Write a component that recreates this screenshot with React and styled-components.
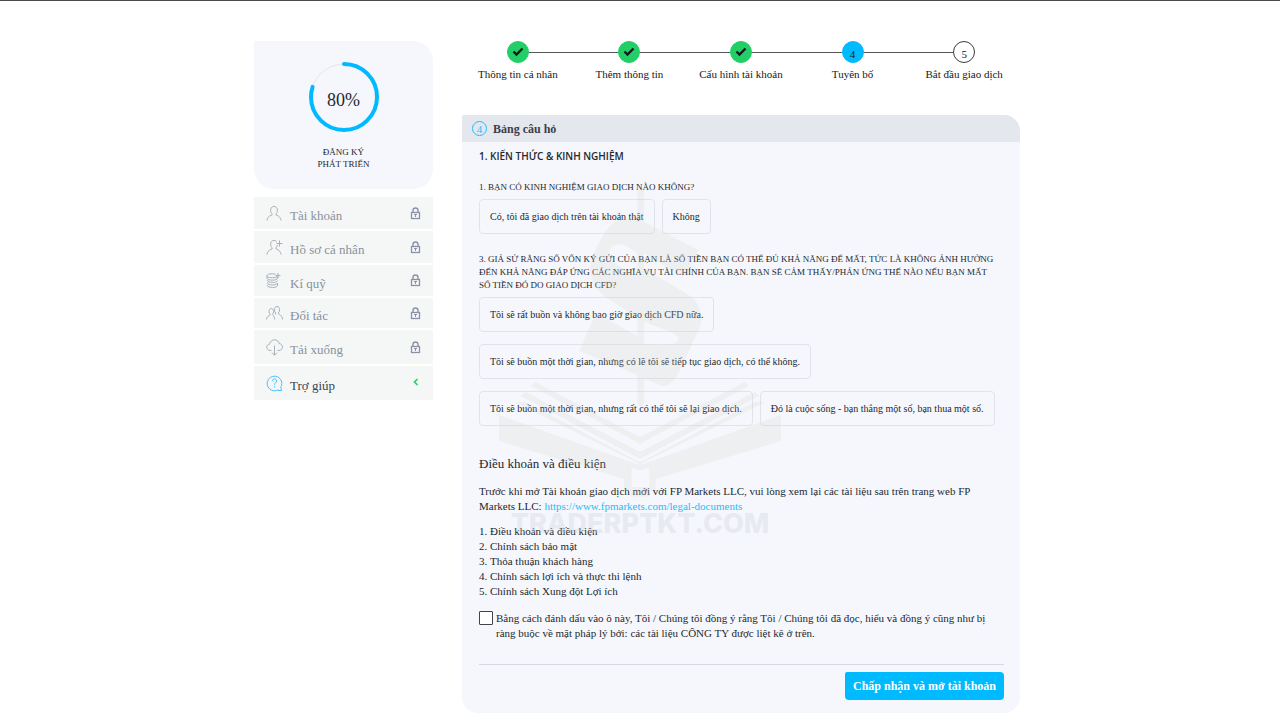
import React from 'react';
import styled, { createGlobalStyle } from 'styled-components';

const GlobalStyle = createGlobalStyle`
  * {
    box-sizing: border-box;
  }

  body {
    margin: 0;
    background: #fff;
    color: #24282f;
    font-family: 'Liberation Serif', 'Times New Roman', serif;
  }
`;

const Page = styled.div`
  position: relative;
  border-top: 1px solid #4a4a4a;
  overflow: hidden;
`;

const Container = styled.div`
  display: grid;
  grid-template-columns: 179px minmax(0, 1fr);
  column-gap: 29px;
  align-items: start;
  max-width: 772px;
  margin: 0 auto;
  padding: 40px 6px 7px 0;
`;

const Sidebar = styled.aside`
  display: flex;
  flex-direction: column;
  gap: 8px;
`;

const ProgressCard = styled.section`
  display: flex;
  flex-direction: column;
  align-items: center;
  height: 148px;
  padding-top: 20px;
  border-radius: 0 20px 20px 20px;
  background: #f5f7fc;
`;

const Ring = styled.div`
  display: grid;
  place-items: center;
  width: 72px;
  height: 72px;

  > * {
    grid-area: 1 / 1;
  }
`;

const Percent = styled.span`
  padding-top: 6px;
  font-size: 18px;
  line-height: 20px;
`;

const ProgressLabel = styled.p`
  margin: 13px 0 0;
  font-size: 9px;
  line-height: 12px;
  text-align: center;
`;

const Menu = styled.nav`
  display: flex;
  flex-direction: column;
  gap: 2px;
`;

const MenuLink = styled.a`
  display: flex;
  align-items: center;
  height: ${({ $height }) => $height}px;
  padding: 0 12px;
  background: #f5f7f7;
  color: ${({ $active }) => ($active ? '#3d434c' : '#89909c')};
  font-size: 13px;
  line-height: 16px;
  text-decoration: none;

  > svg:first-child {
    flex: none;
    margin-right: 7px;
    color: ${({ $active }) => ($active ? '#45c4fa' : '#a9aeb9')};
  }
`;

const MenuText = styled.span`
  flex: 1;
  padding-top: 6px;
`;

const Main = styled.main`
  min-width: 0;
`;

const Steps = styled.ol`
  display: grid;
  grid-template-columns: repeat(5, 1fr);
  margin: 0;
  padding: 0;
  list-style: none;
`;

const Step = styled.li`
  display: flex;
  flex-direction: column;
  align-items: center;
  color: #16181c;
  font-size: 11px;
  line-height: 14px;
  white-space: nowrap;
`;

const StepTrack = styled.div`
  display: flex;
  align-items: center;
  width: 100%;
  margin-bottom: 4px;

  &::before,
  &::after {
    content: '';
    flex: 1;
    height: 1px;
    background: #55575b;
  }

  ${Step}:first-child &::before,
  ${Step}:last-child &::after {
    visibility: hidden;
  }
`;

const dotColors = {
  done: '#22ce66',
  current: '#00baff',
  todo: '#fff',
};

const StepDot = styled.span`
  display: flex;
  align-items: center;
  justify-content: center;
  width: 22px;
  height: 22px;
  border: 1px solid ${({ $state }) => ($state === 'todo' ? '#3a3c40' : dotColors[$state])};
  border-radius: 50%;
  background: ${({ $state }) => dotColors[$state]};
  padding-top: ${({ $state }) => ($state === 'done' ? '0' : '3px')};
`;

const Panel = styled.section`
  margin-top: 34px;
  border-radius: 2px 16px 16px 16px;
  background: #f5f7fc;
  overflow: hidden;
`;

const PanelHeader = styled.header`
  display: flex;
  align-items: center;
  gap: 6px;
  height: 27px;
  padding: 0 10px;
  background: #e5e7ef;
`;

const PanelNumber = styled.span`
  display: flex;
  align-items: center;
  justify-content: center;
  width: 15px;
  height: 15px;
  border: 1px solid #1fbdfb;
  border-radius: 50%;
  color: #1fbdfb;
  font-size: 11px;
`;

const PanelTitle = styled.h1`
  margin: 0;
  color: #3a3f49;
  font-size: 12px;
  line-height: 16px;
`;

const PanelBody = styled.div`
  padding: 7px 16px 13px 17px;
`;

const SectionTitle = styled.h2`
  margin: 0 0 18px;
  font-family: 'Open Sans', 'Noto Sans', sans-serif;
  font-size: 10px;
  font-weight: 600;
  line-height: 14px;
`;

const Question = styled.fieldset`
  min-width: 0;
  margin: 0 0 19px;
  padding: 0;
  border: 0;
`;

const QuestionText = styled.legend`
  padding: 0 6px 0 0;
  margin-bottom: 5px;
  font-size: 9px;
  line-height: 13px;
`;

const Options = styled.div`
  display: flex;
  flex-wrap: wrap;
  gap: 12px 7px;
`;

const OptionButton = styled.button`
  height: 35px;
  padding: 0 10px;
  border: 1px solid #e0e4ea;
  border-radius: 4px;
  background: transparent;
  color: inherit;
  font: 10px 'Liberation Serif', serif;
  cursor: pointer;
`;

const TermsTitle = styled.h2`
  margin: 30px 0 12px;
  font-size: 13px;
  font-weight: 400;
  line-height: 16px;
`;

const Text = styled.p`
  margin: 0;
  font-size: 11px;
  line-height: 15px;
`;

const DocumentLink = styled.a`
  color: #1fbdfb;
  text-decoration: none;
`;

const DocumentList = styled.ol`
  margin: 10px 0 12px;
  padding: 0;
  list-style-position: inside;
  font-size: 11px;
  line-height: 15px;
`;

const Consent = styled.label`
  display: flex;
  align-items: flex-start;
  gap: 3px;
  font-size: 11px;
  line-height: 15px;
`;

const Checkbox = styled.input`
  appearance: none;
  flex: none;
  width: 14px;
  height: 14px;
  margin: 0;
  border: 1px solid #3f4247;
  border-radius: 1px;
  background: #fff;

  &:checked {
    background: #00baff;
  }
`;

const PanelFooter = styled.footer`
  display: flex;
  justify-content: flex-end;
  margin-top: 23px;
  padding-top: 7px;
  border-top: 1px solid #d5d9e4;
`;

const SubmitButton = styled.button`
  width: 159px;
  height: 28px;
  padding: 0;
  border: 0;
  border-radius: 2px 4px 4px 4px;
  background: #00baff;
  color: #fff;
  font: bold 12px 'Liberation Serif', serif;
  cursor: pointer;
`;

const Watermark = styled.div`
  position: absolute;
  top: 184px;
  left: 50%;
  display: flex;
  flex-direction: column;
  align-items: center;
  transform: translateX(-50%);
  pointer-events: none;
`;

const WatermarkText = styled.span`
  color: rgba(198, 202, 212, 0.3);
  font-family: Inter, 'Liberation Sans', sans-serif;
  font-size: 27px;
  font-weight: 800;
  line-height: 38px;
`;

const Stroked = styled.svg.attrs({ fill: 'none', stroke: 'currentColor', 'aria-hidden': true })``;

const LockSvg = styled(Stroked)`
  color: #8c91a5;
`;

const ArrowSvg = styled(Stroked)`
  color: #22ce66;
`;

const UserIcon = () => (
  <Stroked width="17" height="17" viewBox="0 0 17 17">
    <path d="M8 1.5c2.200 0 3.400 1.500 3.400 3.800 0 1.700-.7 3-1.700 3.700 0 .8.400 1.100 1.300 1.400 2.300.8 3.600 2.300 4 5.100M8 1.500C5.800 1.500 4.600 3 4.600 5.300c0 1.700.7 3 1.700 3.700 0 .8-.4 1.100-1.300 1.400-2.300.8-3.600 2.300-4 5.100" />
  </Stroked>
);

const UserPlusIcon = () => (
  <Stroked width="17" height="17" viewBox="0 0 17 17">
    <path d="M11 3C10.300 2 9.300 1.500 8 1.500 5.800 1.500 4.600 3 4.600 5.300c0 1.700.7 3 1.700 3.700 0 .8-.4 1.100-1.300 1.400-2.300.8-3.600 2.300-4 5.100M11.400 6c-.1 1.400-.7 2.400-1.700 3 0 .8.400 1.100 1.300 1.400 2.300.8 3.600 2.300 4 5.100" />
    <path d="M10.500 4.500h6M13.500 1.500v6" />
  </Stroked>
);

const CoinsIcon = () => (
  <Stroked width="17" height="17" viewBox="0 0 17 17">
    <path d="M9.500 2.200C5.500 1.300 1 2 1 3.800c0 2.600 10.500 2.600 10.500 0M1 3.800v2.400c0 2.600 10.500 2.600 10.500 0V5M1.500 8c-1.800 2.700 10 3.500 10 .5M1.500 10.500c-1.800 2.700 10 3.500 10 .5M1.500 13c-1.800 2.700 10 3.500 10 .5v-2.500M9.500 3.500h5M12 1v5" />
  </Stroked>
);

const PartnersIcon = () => (
  <Stroked width="17" height="17" viewBox="0 0 17 17">
    <path d="M11 1.500C9.300 1.500 8.400 2.800 8.400 4.800c0 1.500.5 2.600 1.300 3.200 0 1-.3 1.300-.8 1.600M11 1.500c1.700 0 2.600 1.300 2.600 3.300 0 1.500-.5 2.600-1.300 3.200 0 .9.300 1.200 1 1.500 1.900.8 2.900 2.300 3.200 5" />
    <path d="M5.300 3.500C3.900 3.500 3 4.700 3 6.500c0 1.300.5 2.300 1.200 2.800 0 .8-.3 1-.9 1.300C1.600 11.300.8 12.400.5 14.500M5.300 3.500c1.400 0 2.200 1.200 2.200 3 0 1.300-.4 2.300-1.100 2.800 0 1 2 1.200 2.300 5.200" />
  </Stroked>
);

const DownloadIcon = () => (
  <Stroked width="17" height="17" viewBox="0 0 17 17">
    <path d="M5.500 11.500H4.200C2.200 11.500.7 10 .7 8.300c0-1.800 1.300-3 2.900-3.100C4 2.500 6 .8 8.500.8c2.400 0 4.200 1.500 4.700 3.800 1.900.1 3.200 1.500 3.200 3.400 0 2-1.400 3.500-3.400 3.500h-1.500M8.500 6.500v9.700M6 13.700l2.500 2.500 2.500-2.500" />
  </Stroked>
);

const HelpIcon = () => (
  <Stroked width="17" height="17" viewBox="0 0 17 17">
    <path d="M12.200 14.800A7.300 7.300 0 1 1 14.800 12.200L15.500 15.500h-3.300Z" />
    <path d="M6.300 6.200c.1-1.400.9-2.200 2.200-2.200s2.200.8 2.200 2c0 1.700-2.200 1.800-2.200 3.700M8.500 11.200v1.300" />
  </Stroked>
);

const LockIcon = () => (
  <LockSvg width="11" height="13" viewBox="0 0 11 13">
    <rect x="1.500" y="5.500" width="8" height="6" strokeWidth="1.300" />
    <path d="M3 5.500V3.200C3 1.800 4 1 5.500 1S8 1.800 8 3.200v2.300" strokeWidth="1.400" />
    <path d="M4 7.500h3M5.500 7.500V10" />
  </LockSvg>
);

const ArrowIcon = () => (
  <ArrowSvg width="11" height="17" viewBox="0 0 11 17">
    <path d="M7.500 4 4.500 7l3 3" strokeWidth="1.600" />
  </ArrowSvg>
);

const CheckIcon = () => (
  <Stroked width="12" height="12" viewBox="0 0 12 12">
    <path d="M1.500 5.500 4.500 8.500 10.500 2.500" strokeWidth="2.400" />
  </Stroked>
);

// The blue arc covers 80% of the circle, starting from the top
const ProgressRing = () => (
  <Stroked width="72" height="72" viewBox="0 0 72 72">
    <circle cx="36" cy="36" r="33" stroke="#e3e5e8" />
    <circle
      cx="36"
      cy="36"
      r="33"
      stroke="#00baff"
      strokeWidth="4"
      strokeLinecap="round"
      pathLength="100"
      strokeDasharray="80 100"
      transform="rotate(-90 36 36)"
    />
  </Stroked>
);

const BookLogo = () => (
  <svg width="300" height="320" viewBox="0 0 900 960" fill="#d2d0c4" fillOpacity="0.2" aria-hidden="true">
    <path d="M442 15h20v96l163 84-45 80-118-70v44l135 82q42 26 36 88l-58 125q-24 56-55 61L462 580v80l-10 5-10-5v-90L268 497l50-115 124 72v-56L345 335q-50-38-43-95 8-40 36-86 28-52 70-55l34 8ZM372 180q-18 12-12 35 5 16 35 32l47 26v-68q-45-38-70-25ZM462 410v68l45 2q45 2 58-12 5-10-15-24Z" fillRule="evenodd" />
    <path d="M135 590 450 757l315-167 12 13-327 173-327-173ZM105 620l345 181 345-181 12 13-357 189L93 633ZM75 652l30-2 345 182 345-182 30 2-375 185Z" />
    <path d="M27 690 425 832q25 12 50 0L873 690v78L497 882v33h-19v20h-56v-20h-20v-33L27 768ZM425 848v58h53v-58l-27 8Z" fillRule="evenodd" />
  </svg>
);

const menu = [
  { label: 'Tài khoản', icon: UserIcon, height: 32 },
  { label: 'Hồ sơ cá nhân', icon: UserPlusIcon, height: 32 },
  { label: 'Kí quỹ', icon: CoinsIcon, height: 31 },
  { label: 'Đối tác', icon: PartnersIcon, height: 30 },
  { label: 'Tải xuống', icon: DownloadIcon, height: 34 },
  { label: 'Trợ giúp', icon: HelpIcon, height: 34, active: true },
];

const steps = [
  { label: 'Thông tin cá nhân', state: 'done' },
  { label: 'Thêm thông tin', state: 'done' },
  { label: 'Cấu hình tài khoản', state: 'done' },
  { label: 'Tuyên bố', state: 'current' },
  { label: 'Bắt đầu giao dịch', state: 'todo' },
];

const documents = [
  'Điều khoản và điều kiện',
  'Chính sách bảo mật',
  'Thỏa thuận khách hàng',
  'Chính sách lợi ích và thực thi lệnh',
  'Chính sách Xung đột Lợi ích',
];

const App = () => (
  <Page>
    <GlobalStyle />
    <Container>
      <Sidebar>
        <ProgressCard>
          <Ring>
            <ProgressRing />
            <Percent>80%</Percent>
          </Ring>
          <ProgressLabel>
            ĐĂNG KÝ
            <br />
            PHÁT TRIỂN
          </ProgressLabel>
        </ProgressCard>
        <Menu>
          {menu.map(({ label, icon: Icon, height, active }) => (
            <MenuLink key={label} href="#" $height={height} $active={active}>
              <Icon />
              <MenuText>{label}</MenuText>
              {active ? <ArrowIcon /> : <LockIcon />}
            </MenuLink>
          ))}
        </Menu>
      </Sidebar>
      <Main>
        <Steps>
          {steps.map(({ label, state }, index) => (
            <Step key={label}>
              <StepTrack>
                <StepDot $state={state}>{state === 'done' ? <CheckIcon /> : index + 1}</StepDot>
              </StepTrack>
              {label}
            </Step>
          ))}
        </Steps>
        <Panel>
          <PanelHeader>
            <PanelNumber>4</PanelNumber>
            <PanelTitle>Bảng câu hỏ</PanelTitle>
          </PanelHeader>
          <PanelBody>
            <SectionTitle>1. KIẾN THỨC &amp; KINH NGHIỆM</SectionTitle>
            <Question>
              <QuestionText>1. BẠN CÓ KINH NGHIỆM GIAO DỊCH NÀO KHÔNG?</QuestionText>
              <Options>
                <OptionButton type="button">Có, tôi đã giao dịch trên tài khoản thật</OptionButton>
                <OptionButton type="button">Không</OptionButton>
              </Options>
            </Question>
            <Question>
              <QuestionText>
                3. GIẢ SỬ RẰNG SỐ VỐN KÝ GỬI CỦA BẠN LÀ SỐ TIỀN BẠN CÓ THỂ ĐỦ KHẢ NĂNG ĐỂ MẤT, TỨC LÀ
                KHÔNG ẢNH HƯỞNG ĐẾN KHẢ NĂNG ĐÁP ỨNG CÁC NGHĨA VỤ TÀI CHÍNH CỦA BẠN. BẠN SẼ CẢM
                THẤY/PHẢN ỨNG THẾ NÀO NẾU BẠN MẤT SỐ TIỀN ĐÓ DO GIAO DỊCH CFD?
              </QuestionText>
              <Options>
                <OptionButton type="button">Tôi sẽ rất buồn và không bao giờ giao dịch CFD nữa.</OptionButton>
                <OptionButton type="button">
                  Tôi sẽ buồn một thời gian, nhưng có lẽ tôi sẽ tiếp tục giao dịch, có thể không.
                </OptionButton>
                <OptionButton type="button">
                  Tôi sẽ buồn một thời gian, nhưng rất có thể tôi sẽ lại giao dịch.
                </OptionButton>
                <OptionButton type="button">Đó là cuộc sống - bạn thắng một số, bạn thua một số.</OptionButton>
              </Options>
            </Question>
            <TermsTitle>Điều khoản và điều kiện</TermsTitle>
            <Text>
              Trước khi mở Tài khoản giao dịch mới với FP Markets LLC, vui lòng xem lại các tài liệu sau
              trên trang web FP Markets LLC:{' '}
              <DocumentLink href="https://www.fpmarkets.com/legal-documents">
                https://www.fpmarkets.com/legal-documents
              </DocumentLink>
            </Text>
            <DocumentList>
              {documents.map((name) => (
                <li key={name}>{name}</li>
              ))}
            </DocumentList>
            <Consent>
              <Checkbox type="checkbox" />
              <span>
                Bằng cách đánh dấu vào ô này, Tôi / Chúng tôi đồng ý rằng Tôi / Chúng tôi đã đọc, hiểu và
                đồng ý cũng như bị ràng buộc về mặt pháp lý bởi: các tài liệu CÔNG TY được liệt kê ở trên.
              </span>
            </Consent>
            <PanelFooter>
              <SubmitButton type="button">Chấp nhận và mở tài khoản</SubmitButton>
            </PanelFooter>
          </PanelBody>
        </Panel>
      </Main>
    </Container>
    <Watermark>
      <BookLogo />
      <WatermarkText>TRADERPTKT.COM</WatermarkText>
    </Watermark>
  </Page>
);

export default App;
